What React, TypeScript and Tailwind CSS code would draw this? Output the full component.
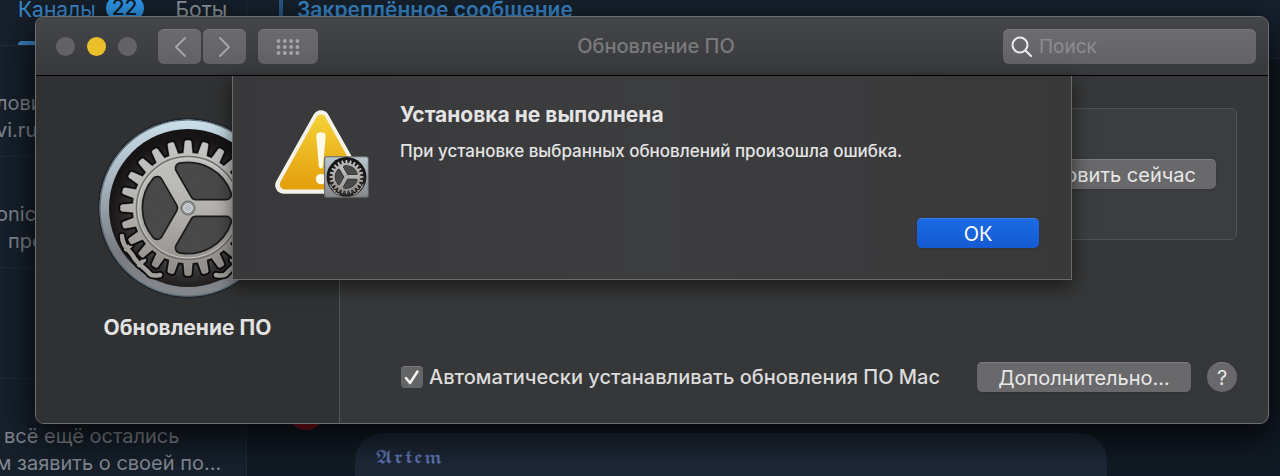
import { useState } from 'react'
import type { ReactNode } from 'react'

const TEETH = 24

// One closed outline for the toothed rim, centred on 0,0
function gearOutline(root: number, tip: number): string {
  const step = (Math.PI * 2) / TEETH
  const points: string[] = []
  const push = (r: number, a: number) =>
    points.push(`${(Math.sin(a) * r).toFixed(2)},${(-Math.cos(a) * r).toFixed(2)}`)
  for (let i = 0; i < TEETH; i++) {
    const a = i * step
    push(root, a - step * 0.3)
    push(tip - 1, a - step * 0.18)
    push(tip, a - step * 0.12)
    push(tip, a + step * 0.12)
    push(tip - 1, a + step * 0.18)
    push(root, a + step * 0.3)
  }
  return `M${points.join('L')}Z`
}

const outline = gearOutline(55, 67.5)
const hook = 'M-66 28C-66 38-58 43-55 48C-51 56-43 60-39 65C-37 68-33 68-28 67M-62 41L-57 37M-49 57L-44 52'
const hole = 'M7.8-13.5L38.2-13.5A40.5 40.5 0 0 0-7.4-39.8Z'

function Gear({ id }: { id: string }) {
  return (
    <g>
      <defs>
        <linearGradient id={`${id}-metal`} x1="0" y1="0" x2="0" y2="1">
          <stop offset="0" stopColor="#c3c6c4" />
          <stop offset="0.5" stopColor="#b5b3af" />
          <stop offset="1" stopColor="#8d8a86" />
        </linearGradient>
        <radialGradient id={`${id}-well`} cx="0.5" cy="0.55" r="0.5">
          <stop offset="0" stopColor="#626161" />
          <stop offset="0.6" stopColor="#484747" />
          <stop offset="0.8" stopColor="#2b2929" />
          <stop offset="1" stopColor="#161415" />
        </radialGradient>
      </defs>
      <circle r="79" fill={`url(#${id}-well)`} />
      {[1, -1].map((side) => (
        <g key={side} transform={`scale(${side} 1)`} fill="none" strokeLinecap="round" strokeLinejoin="round">
          <path d={hook} stroke="#0d0b0c" strokeWidth="8" />
          <path d={hook} stroke="#a3a19d" strokeWidth="4.5" />
        </g>
      ))}
      <path d={outline} fill="none" stroke="#0f0d0e" strokeWidth="4.5" strokeLinejoin="round" />
      <path d={outline} fill={`url(#${id}-metal)`} stroke="#d3d3d0" strokeWidth="0.4" />
      <circle r="51.5" fill="none" stroke="#6f706e" strokeWidth="1.4" />
      <circle r="50" fill="none" stroke="#d0d1ce" strokeWidth="0.8" />
      {[0, 120, 240].map((angle) => (
        <g key={angle} transform={`rotate(${angle})`} strokeLinejoin="round">
          <path d={hole} fill="#1d1b1b" stroke="#1d1b1b" strokeWidth="12" />
          <path d={hole} fill="#4a4949" stroke="#4a4949" strokeWidth="8.5" />
        </g>
      ))}
      <circle r="7" fill="#8d9093" stroke="#686a6c" strokeWidth="1" />
      <circle r="4.4" fill="#b9bec3" stroke="#dfe2e4" strokeWidth="1" />
    </g>
  )
}

function UpdateIcon() {
  return (
    <svg viewBox="-90 -90 180 180" className="size-[180px] shrink-0" aria-hidden="true">
      <defs>
        <linearGradient id="ring" x1="0" y1="0" x2="0" y2="1">
          <stop offset="0" stopColor="#c9dfe9" />
          <stop offset="0.35" stopColor="#a6b4be" />
          <stop offset="0.75" stopColor="#787c81" />
          <stop offset="1" stopColor="#85888d" />
        </linearGradient>
      </defs>
      <circle r="90" fill="#1c242b" />
      <circle r="88.5" fill="url(#ring)" />
      <circle r="88" fill="none" stroke="#5d6c77" strokeWidth="1.2" />
      <Gear id="large" />
    </svg>
  )
}

function WarningIcon() {
  return (
    <svg viewBox="0 0 96 92" className="h-24 w-[100px] shrink-0" aria-hidden="true">
      <defs>
        <linearGradient id="caution" x1="0" y1="0" x2="0" y2="1">
          <stop offset="0" stopColor="#f4cf35" />
          <stop offset="1" stopColor="#e5a00d" />
        </linearGradient>
        <linearGradient id="plate" x1="0" y1="0" x2="0" y2="1">
          <stop offset="0" stopColor="#b9c7cf" />
          <stop offset="1" stopColor="#85888b" />
        </linearGradient>
      </defs>
      <path d="M47 13L83 77H11Z" fill="#f5f2ea" stroke="#f5f2ea" strokeWidth="16" strokeLinejoin="round" />
      <path d="M47 14L81.500 76H12.500Z" fill="url(#caution)" stroke="url(#caution)" strokeWidth="10" strokeLinejoin="round" />
      <path d="M42.500 30Q42.500 26 47 26T51.500 30L49 59Q47 63 45 59Z" fill="#fffbe8" />
      <circle cx="47" cy="71" r="5" fill="#fffbe8" />
      <rect x="50.500" y="49.500" width="42" height="39" rx="2" fill="url(#plate)" stroke="#626466" />
      <g transform="translate(71.500 69) scale(0.22)">
        <circle r="80" fill="#111" />
        <g transform="scale(1.1)">
          <Gear id="small" />
        </g>
      </g>
    </svg>
  )
}

function ChatRow({ children }: { children?: ReactNode }) {
  return (
    <li className="flex h-[111px] shrink-0 flex-col justify-end overflow-hidden whitespace-pre border-b border-[#202a35] pb-3 text-xl leading-[27px] text-[#858c96]">
      {children}
    </li>
  )
}

function Messenger() {
  return (
    <div className="absolute inset-0 flex overflow-hidden bg-[#17212c]">
      <aside className="flex w-[247px] shrink-0 flex-col overflow-hidden border-r border-[#222c37]">
        <nav className="flex h-[46px] shrink-0 gap-8 border-b border-[#25303b] pl-[18px] text-[21px] leading-5">
          <a href="#channels" className="flex flex-col justify-between text-[#3d8fd6]">
            <span className="flex items-start gap-[10px]">
              Каналы
              <span className="-mt-1 flex h-6 items-center rounded-full bg-[#2f9bf0] px-[6px] font-medium text-[#15202b]">22</span>
            </span>
            <span className="h-1 rounded-t-sm bg-[#3d8fd6]" />
          </a>
          <a href="#bots" className="text-[#9299a2]">Боты</a>
        </nav>
        <ul>
          <ChatRow>
            <span className="-ml-1">лови</span>
            <span className="-ml-1">vi.ru</span>
          </ChatRow>
          <ChatRow>
            <span className="-ml-1">onic</span>
            <span className="pl-2">про</span>
          </ChatRow>
          <ChatRow />
          <ChatRow>
            <span className="pl-1">всё ещё остались</span>
            <span className="-ml-1">м заявить о своей по...</span>
          </ChatRow>
        </ul>
      </aside>
      <section className="flex min-w-0 flex-1 flex-col">
        <header className="flex h-[59px] shrink-0 items-start gap-[14px] border-b border-[#222d38] bg-[#17222e] pl-8">
          <span className="h-12 w-1 bg-[#285b8a]" />
          <span className="text-[21px] leading-5 font-semibold text-[#3a89cc]">Закреплённое сообщение</span>
        </header>
        <div className="flex flex-1 flex-col justify-end bg-[#121b25]">
          <span className="ml-[41px] size-9 rounded-full bg-[#8f1620]" />
          <div className="mt-[3px] mr-[173px] ml-[108px] h-[43px] rounded-t-[28px] bg-[#1e2938] px-5 pt-3 font-['DejaVu_Sans','DejaVu_Math_TeX_Gyre',serif] text-[17px] leading-6 text-[#6077b8]">
            𝕬𝖗𝖙𝖊𝖒
          </div>
        </div>
      </section>
    </div>
  )
}

const toolbarButton =
  'flex h-[35px] items-center justify-center rounded-md border-t border-[#7b7b7f] bg-linear-to-b from-[#6b6b6f] to-[#626266] text-[#a5a5a9]'

function Toolbar() {
  const [search, setSearch] = useState<string>('')

  return (
    <header className="grid h-[58px] grid-cols-[1fr_auto_1fr] items-center bg-linear-to-b from-[#454649] to-[#38393c] pr-3 pl-5">
      <div className="flex items-center">
        <div className="flex gap-3">
          <button aria-label="Закрыть" className="size-[19px] rounded-full bg-[#636366]" />
          <button aria-label="Свернуть" className="size-[19px] rounded-full bg-[#e9c029]" />
          <button aria-label="Развернуть" className="size-[19px] rounded-full bg-[#636366]" />
        </div>
        <div className="ml-[21px] flex gap-[2px]">
          <button aria-label="Назад" className={`${toolbarButton} w-[43px]`}>
            <svg viewBox="0 0 12 20" className="h-5 w-3" fill="none" stroke="currentColor" strokeWidth="2" strokeLinecap="round" strokeLinejoin="round">
              <path d="M11 1L2 10L11 19" />
            </svg>
          </button>
          <button aria-label="Вперёд" className={`${toolbarButton} w-[43px]`}>
            <svg viewBox="0 0 12 20" className="h-5 w-3" fill="none" stroke="currentColor" strokeWidth="2" strokeLinecap="round" strokeLinejoin="round">
              <path d="M1 1L10 10L1 19" />
            </svg>
          </button>
        </div>
        <button aria-label="Показать все" className={`${toolbarButton} ml-3 w-[60px]`}>
          <svg viewBox="0 0 24 18" className="h-[18px] w-6" fill="currentColor">
            {[2.5, 8.8, 15.1, 21.4].map((x) =>
              [3, 9, 15].map((y) => <circle key={`${x}-${y}`} cx={x} cy={y} r="1.9" />)
            )}
          </svg>
        </button>
      </div>
      <h1 className="text-xl leading-6 font-medium text-[#7a7a7d]">Обновление ПО</h1>
      <label className="flex h-[35px] w-[253px] items-center gap-[6px] justify-self-end rounded-md border-t border-[#7b7b7f] bg-linear-to-b from-[#6c6c70] to-[#636367] px-2">
        <svg viewBox="0 0 22 22" className="size-[22px] shrink-0" fill="none" stroke="#ececee" strokeWidth="2" strokeLinecap="round">
          <circle cx="9" cy="9" r="7.500" />
          <path d="M14.500 14.500L20 20" />
        </svg>
        <input
          type="text"
          aria-label="Поиск"
          placeholder="Поиск"
          value={search}
          onChange={(e) => setSearch(e.target.value)}
          className="min-w-0 flex-1 bg-transparent text-[19px] leading-6 outline-none placeholder:text-[#8d8d91]"
        />
      </label>
    </header>
  )
}

const pushButton =
  'h-[30px] rounded-[5px] border-t border-[#7c7d7e] bg-[#69696b] text-center text-xl leading-7 whitespace-nowrap text-[#e8e8e8] shadow-sm'

function ErrorSheet() {
  return (
    <div
      role="alertdialog"
      aria-labelledby="sheet-title"
      aria-describedby="sheet-text"
      className="absolute top-0 left-1/2 flex w-[840px] -translate-x-1/2 flex-col border border-t-0 border-[#6a6a6b] bg-[#3a3a3c] bg-linear-to-r from-[#39393b] via-[#3c3d3f] to-[#39393a] pt-[27px] pr-8 pb-[31px] pl-[39px] shadow-[0_6px_18px_rgba(0,0,0,0.55)]"
    >
      <div className="flex h-[115px] gap-7">
        <div className="pt-[2px]">
          <WarningIcon />
        </div>
        <div>
          <h2 id="sheet-title" className="text-[21px] leading-6 font-bold text-[#e4e4e4]">Установка не выполнена</h2>
          <p id="sheet-text" className="mt-3 text-[17px] leading-6 font-medium text-[#e4e4e4]">
            При установке выбранных обновлений произошла ошибка.
          </p>
        </div>
      </div>
      <button className="h-[30px] w-[122px] self-end rounded-[5px] border-t border-[#3a80ec] bg-linear-to-b from-[#1a69e6] to-[#155bd0] text-xl leading-7 text-white shadow-sm">
        ОК
      </button>
    </div>
  )
}

function UpdateWindow() {
  const [autoInstall, setAutoInstall] = useState<boolean>(true)

  return (
    <div className="relative overflow-hidden rounded-[9px] border border-[#6d6e70] bg-[#363738] shadow-[0_12px_36px_6px_rgba(0,0,0,0.7)]">
      <Toolbar />
      <div className="relative flex border-t border-black">
        <aside className="flex w-[304px] shrink-0 flex-col items-center border-r border-[#545556] bg-[#303132] pt-[42px]">
          <UpdateIcon />
          <h2 className="mt-[18px] text-[21px] leading-6 font-bold text-[#e2e2e2]">Обновление ПО</h2>
        </aside>
        <main className="flex min-w-0 flex-1 flex-col pt-8 pr-[31px] pb-[31px] pl-[61px]">
          <section className="flex h-[132px] items-center justify-end rounded-md border border-[#515254] bg-[#3c3d3e] pr-5">
            <button className={`${pushButton} px-5`}>Обновить сейчас</button>
          </section>
          <div className="mt-[122px] flex items-center">
            <label className="flex flex-1 items-center gap-[6px] text-xl leading-7 font-medium whitespace-nowrap text-[#dcdcdc]">
              <span className="grid size-[22px] shrink-0">
                <input
                  type="checkbox"
                  checked={autoInstall}
                  onChange={(e) => setAutoInstall(e.target.checked)}
                  className="col-start-1 row-start-1 size-[22px] appearance-none rounded-[4px] border-t border-[#7a7a7c] bg-[#646567]"
                />
                {autoInstall && (
                  <svg viewBox="0 0 22 22" className="pointer-events-none col-start-1 row-start-1 size-[22px]" fill="none" stroke="#f2f2f2" strokeWidth="2.500" strokeLinecap="round" strokeLinejoin="round">
                    <path d="M5 12L9 17L16.500 5.500" />
                  </svg>
                )}
              </span>
              Автоматически устанавливать обновления ПО Mac
            </label>
            <button className={`${pushButton} w-[214px]`}>Дополнительно...</button>
            <button aria-label="Справка" className="ml-4 size-[30px] rounded-full border-t border-[#7c7d7e] bg-[#69696b] text-xl leading-7 text-[#e8e8e8]">
              ?
            </button>
          </div>
        </main>
        <ErrorSheet />
      </div>
    </div>
  )
}

function App() {
  return (
    <div className="relative min-h-screen w-full overflow-hidden pt-4 pr-[11px] pb-[52px] pl-[35px] font-['Inter','Liberation_Sans',sans-serif]">
      <Messenger />
      <UpdateWindow />
    </div>
  )
}

export default App
